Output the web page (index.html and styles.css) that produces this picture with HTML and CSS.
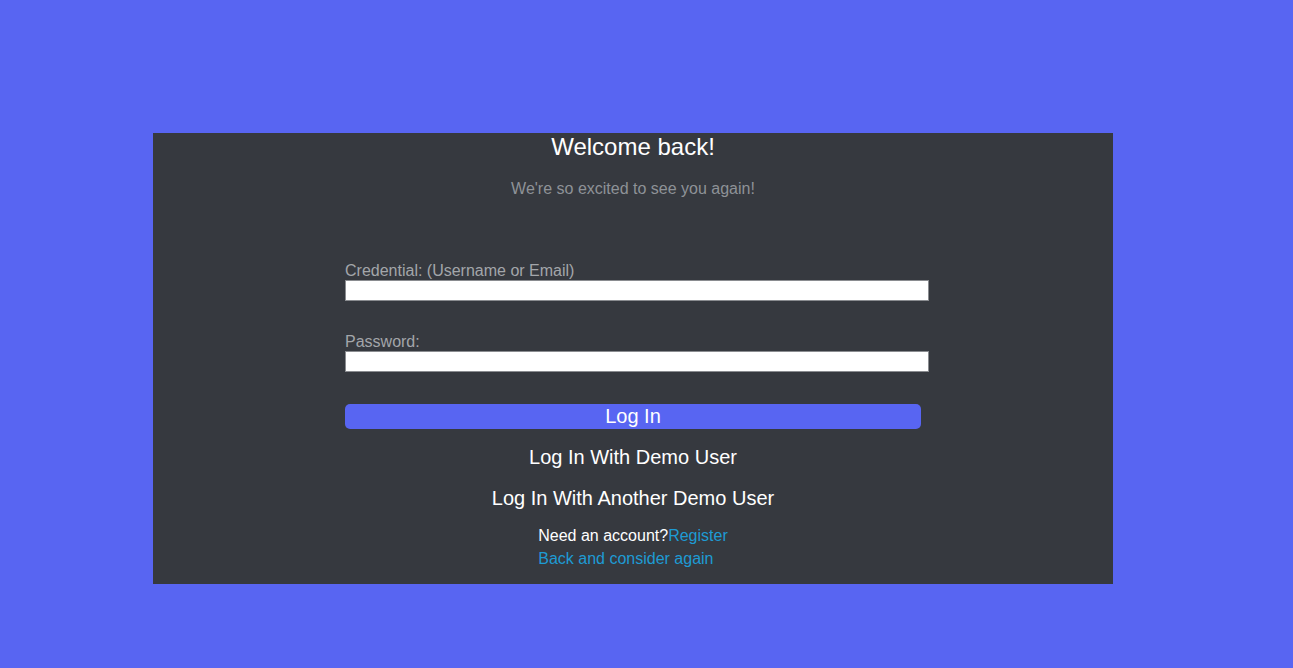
FILE: index.html
```html
<!DOCTYPE html>
<html lang="en">
<head>
<meta charset="utf-8">
<title>Log In</title>
<link rel="stylesheet" href="styles.css">
</head>
<body>
<div class="page">
  <div class="card">
    <h2 class="title">Welcome back!</h2>
    <p class="subtitle">We're so excited to see you again!</p>
    <form class="form">
      <div class="field field-first">
        <label class="label" for="cred">Credential: (Username or Email)</label>
        <input class="input" id="cred" type="text">
      </div>
      <div class="field">
        <label class="label" for="pw">Password:</label>
        <input class="input" id="pw" type="password">
      </div>
      <button class="login-btn" type="button">Log In</button>
    </form>
    <div class="demo">Log In With Demo User</div>
    <div class="demo demo-second">Log In With Another Demo User</div>
    <div class="footer">
      <div class="footer-inner">
        <div>Need an account?<a class="link" href="#">Register</a></div>
        <div><a class="link" href="#">Back and consider again</a></div>
      </div>
    </div>
  </div>
</div>
</body>
</html>
```

FILE: styles.css
```css
html, body {
  margin: 0;
  padding: 0;
  background: #5865f2;
  font-family: "Liberation Sans", Arial, sans-serif;
}

.page {
  padding: 133px 0 0 153px;
  height: 668px;
  box-sizing: border-box;
}

.card {
  width: 960px;
  background: #36393f;
  padding-bottom: 14px;
  text-align: center;
}

.title {
  margin: 0;
  padding-top: 0;
  font-size: 24px;
  line-height: 28px;
  font-weight: normal;
  color: #ffffff;
}

.subtitle {
  margin: 19px 0 0;
  font-size: 16px;
  line-height: 18px;
  color: #8e9297;
}

.form {
  width: 60%;
  margin: 0 auto;
  text-align: left;
}

.field {
  margin-top: 32px;
}

.field-first {
  margin-top: 64px;
}

.label {
  display: block;
  font-size: 16px;
  line-height: 18px;
  color: #a3a6aa;
  margin-bottom: 0;
}

.input {
  display: block;
  width: calc(100% + 8px);
  height: 21px;
  box-sizing: border-box;
  margin: 0;
  padding: 1px 3px;
  border: 1px solid #8a8c90;
  background: #ffffff;
  font-size: 13px;
}

.login-btn {
  display: block;
  width: 100%;
  height: 25px;
  margin-top: 32px;
  padding: 1px 0;
  border: none;
  border-radius: 5px;
  background: #5865f2;
  color: #ffffff;
  font-family: inherit;
  font-size: 20px;
  line-height: 23px;
}

.demo {
  margin-top: 17px;
  font-size: 20px;
  line-height: 23px;
  color: #ffffff;
}

.demo-second {
  margin-top: 18px;
}

.footer {
  margin-top: 14px;
}

.footer-inner {
  display: inline-block;
  text-align: left;
  font-size: 16px;
  line-height: 23px;
  color: #ffffff;
}

.link {
  color: #1e9bd4;
  text-decoration: none;
}
```
